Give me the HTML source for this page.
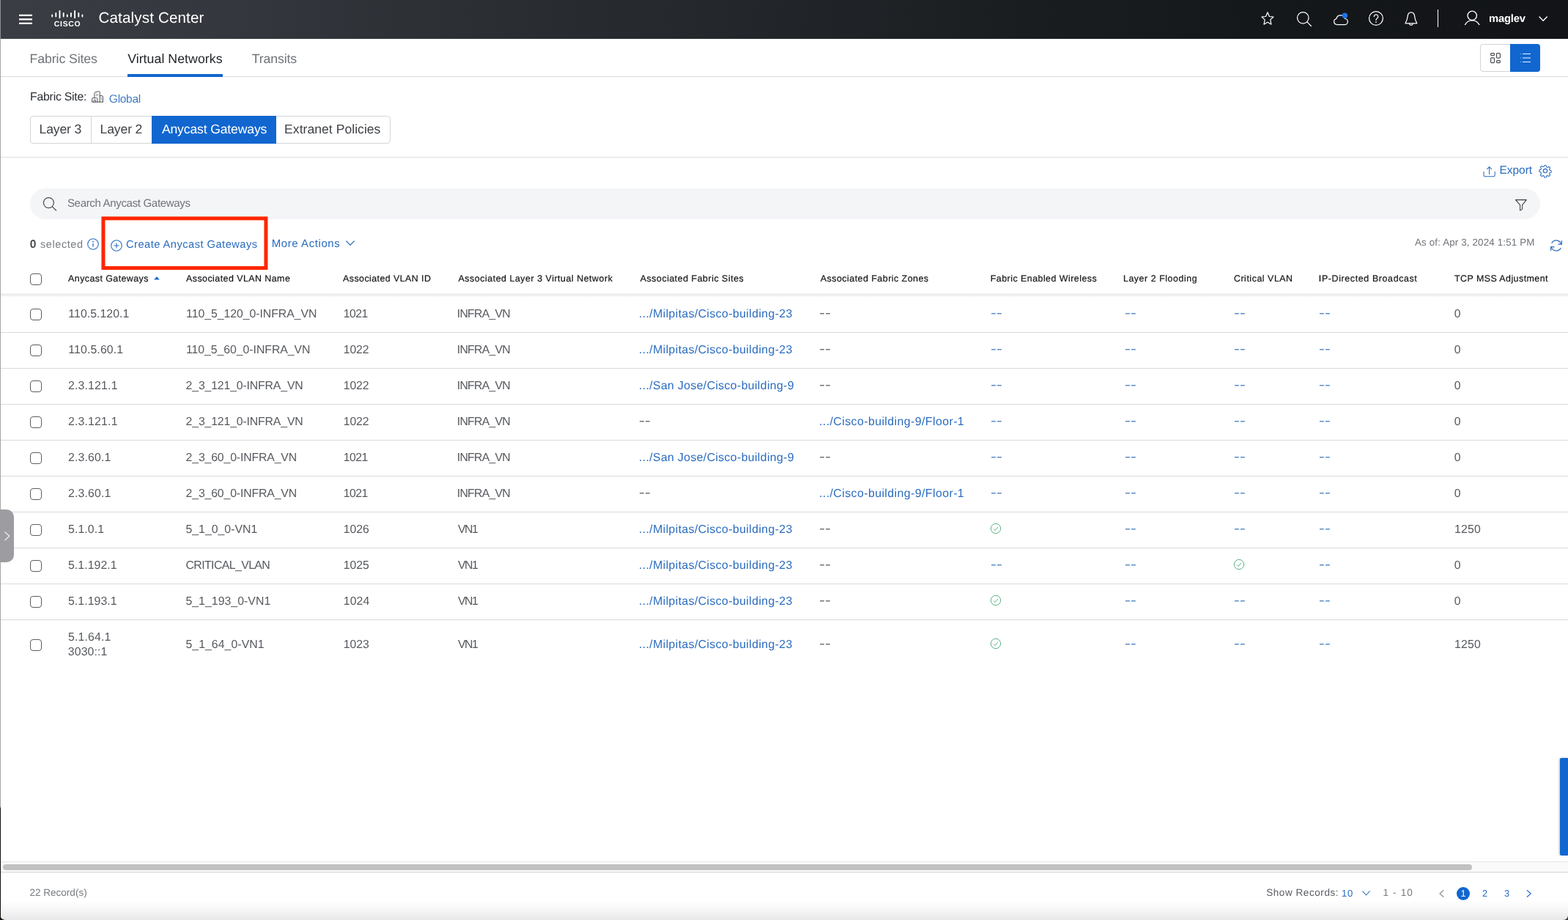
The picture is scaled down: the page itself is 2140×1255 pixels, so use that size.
<!DOCTYPE html>
<html lang="en">
<head>
<meta charset="utf-8">
<title>Catalyst Center - Virtual Networks - Anycast Gateways</title>
<style>
*{box-sizing:border-box;margin:0;padding:0}
html,body{width:2140px;height:1255px;overflow:hidden;background:#fff}
body{font-family:"Liberation Sans",Arial,sans-serif;position:relative;color:#55585d;text-rendering:geometricPrecision}
#app{will-change:transform;position:absolute;left:0;top:0;width:2140px;height:1255px;overflow:hidden;background:#fff}
.t{position:absolute;white-space:pre;display:block;line-height:24px}
.abs{position:absolute}
svg{position:absolute;overflow:visible}
.topbar{position:absolute;left:0;top:0;width:2140px;height:53px;background:linear-gradient(90deg,#3a3d43 0%,#34373d 14%,#2b2e33 30%,#23262a 47%,#1b1e21 64%,#15181b 80%,#121417 100%)}
.edge{position:absolute;left:0;top:53px;width:1px;height:1202px;background:linear-gradient(#a6a6a6 0,#a6a6a6 1047px,#111 1050px,#111 100%)}
.edge0{position:absolute;left:0;top:0;width:1px;height:53px;background:#8e8f92}
.tabline{position:absolute;left:1px;top:104px;width:2139px;height:1px;background:#d9dadd}
.tabsel{position:absolute;left:174px;top:101px;width:130px;height:4px;background:#1166cf}
.viewtg{position:absolute;left:2020px;top:60px;width:82px;height:38px;border:1px solid #d2d3d5;border-radius:4px;background:#fff}
.viewon{position:absolute;left:2061px;top:60px;width:41px;height:38px;background:#1166cf;border-radius:0 4px 4px 0}
.segs{position:absolute;left:41px;top:158px;width:492px;height:38px;border:1px solid #d3d5d8;border-radius:4px;background:#fff}
.segdiv{position:absolute;top:158px;width:1px;height:38px;background:#d3d5d8}
.segon{position:absolute;left:207px;top:158px;width:170px;height:38px;background:#1166cf}
.hr{position:absolute;left:1px;top:214px;width:2139px;height:1px;background:#dcdee0}
.search{position:absolute;left:41px;top:257px;width:2061px;height:42px;border-radius:21px;background:#f4f5f7}
i{display:block;font-style:normal}
.cb{position:absolute;left:41.2px;width:16px;height:16px;border:1px solid #5a5d61;border-radius:4px;background:#fff}
.thshadow{position:absolute;left:1px;top:400px;width:2139px;height:6px;background:linear-gradient(to bottom,#fafafa 0%,#e9e9e9 28%,#f0f0f0 50%,#fafafa 75%,#fff 100%)}
.sep{position:absolute;left:1px;width:2139px;height:1px;background:#d9dadc}
.handle{position:absolute;left:0;top:695px;width:19px;height:72px;background:#9d9da1;border-radius:0 10px 10px 0}
.rtab{position:absolute;left:2129px;top:1034px;width:11px;height:133px;background:#1166cf;border-radius:2px 0 0 2px;box-shadow:-1px 0 3px rgba(0,0,0,.25)}
.sbtop{position:absolute;left:1px;top:1175px;width:2139px;height:1px;background:#e6e6e6}
.sbtrack{position:absolute;left:1px;top:1176px;width:2139px;height:14px;background:#fafafa}
.sbthumb{position:absolute;left:4px;top:1179px;width:2005px;height:8px;border-radius:4px;background:#c1c1c1}
.sbbot{position:absolute;left:1px;top:1189px;width:2139px;height:2px;background:linear-gradient(#dcdcdc,#f0f0f0)}
.botgrad{position:absolute;left:1px;top:1228px;width:2139px;height:27px;background:linear-gradient(rgba(255,255,255,0),rgba(240,240,240,.6) 50%,#e8e8e8)}
.pgon{position:absolute;left:1988px;top:1210px;width:18px;height:18px;border-radius:9px;background:#1166cf}
.corner{position:absolute;bottom:0;width:10px;height:10px}
.ciscot{position:absolute;left:73.8px;top:27.9px;font-size:10.4px;line-height:11px;font-weight:700;color:#fff;letter-spacing:0.75px;white-space:pre}
</style>
</head>
<body>
<div id="app">
<header class="topbar">
<i class="edge0"></i>
<svg class="abs" style="left:26px;top:18px" width="18" height="16" viewBox="0 0 18 16"><path d="M0 2.8h18M0 8.4h18M0 13.8h18" stroke="#fff" stroke-width="2.3" fill="none"/></svg>
<svg class="abs" style="left:69px;top:13px" width="46" height="14" viewBox="0 0 46 14"><g stroke="#fff" stroke-width="1.9" stroke-linecap="round" fill="none"><path d="M2.2 7.4v2.2M7.3 4.9v4.7M12.5 2v9.2M17.7 4.9v4.7M22.8 7.4v2.2M27.9 4.9v4.7M33.1 2v9.2M38.3 4.9v4.7M43.4 7.4v2.2"/></g></svg>
<span class="ciscot">CISCO</span>
<span class="t brand" style="left:134.44px;top:13px;font-size:20.64px;color:#ffffff;letter-spacing:0.134px;">Catalyst Center</span>
<span class="t user" style="left:2032.07px;top:14px;font-size:14.8px;color:#ffffff;font-weight:700;letter-spacing:-0.236px;">maglev</span>
<svg class="abs" style="left:1720px;top:15px" width="20" height="20" viewBox="0 0 20 20"><path d="M10 1.8L12.4 7.5 18 8.1 13.8 11.9 14.9 18.2 10 15.3 5.1 18.2 6.2 11.9 2 8.1 7.6 7.5z" fill="none" stroke="#fff" stroke-width="1.25" stroke-linejoin="round"/></svg>
<svg class="abs" style="left:1769px;top:15px" width="22" height="22" viewBox="0 0 22 22"><circle cx="9.3" cy="9.35" r="7.75" fill="none" stroke="#fff" stroke-width="1.25"/><path d="M14.9 14.9l5.5 5.6" stroke="#fff" stroke-width="1.25" stroke-linecap="round"/></svg>
<svg class="abs" style="left:1819px;top:16px" width="22" height="20" viewBox="0 0 22 20"><path d="M5.6 17.5H16.2A4 4 0 0 0 16.5 9.5 6 6 0 0 0 4.8 9.6 4 4 0 0 0 5.6 17.5z" fill="none" stroke="#fff" stroke-width="1.25" stroke-linejoin="round"/><circle cx="16.4" cy="5.3" r="3.7" fill="#1d74e8"/></svg>
<svg class="abs" style="left:1867px;top:15px" width="22" height="22" viewBox="0 0 22 22"><circle cx="11" cy="10" r="9.4" fill="none" stroke="#fff" stroke-width="1.25"/><path d="M8.3 7.6a2.75 2.75 0 1 1 4.2 2.35c-1 .6-1.5 1.2-1.5 2.45" fill="none" stroke="#fff" stroke-width="1.25" stroke-linecap="round"/><circle cx="11" cy="15.2" r=".85" fill="#fff"/></svg>
<svg class="abs" style="left:1916px;top:15px" width="22" height="22" viewBox="0 0 22 22"><path d="M2 16.8C3.6 14 4.8 11.2 5 8 5.2 4.2 7.2 1.8 9.9 1.8S14.6 4.2 14.8 8C15 11.2 16.2 14 17.8 16.8z" fill="none" stroke="#fff" stroke-width="1.25" stroke-linejoin="round"/><path d="M7.3 17.2a2.7 3 0 0 0 5.2 0" fill="none" stroke="#fff" stroke-width="1.25"/></svg>
<div class="abs" style="left:1961.7px;top:13px;width:1.4px;height:24px;background:#fff"></div>
<svg class="abs" style="left:1998px;top:14px" width="22" height="22" viewBox="0 0 22 22"><circle cx="11.2" cy="7.3" r="6.2" fill="none" stroke="#fff" stroke-width="1.35"/><path d="M1.6 19.6C3.6 16 6.8 13.9 11.2 13.9s7.6 2.1 9.6 5.7" fill="none" stroke="#fff" stroke-width="1.35" stroke-linecap="round"/></svg>
<svg class="abs" style="left:2100px;top:22px" width="12" height="8" viewBox="0 0 12 8"><path d="M1 1l5.1 5.3L11.2 1" fill="none" stroke="#fff" stroke-width="1.4" stroke-linecap="round" stroke-linejoin="round"/></svg>
</header>
<i class="edge"></i>
<nav class="tabs">
<div class="tabline"></div><div class="tabsel"></div>
<a class="t tab" style="left:40.55px;top:68px;font-size:17.73px;color:#70747a;letter-spacing:-0.102px;">Fabric Sites</a>
<a class="t tab" style="left:174.13px;top:68px;font-size:17.73px;color:#1f2226;letter-spacing:0.049px;">Virtual Networks</a>
<a class="t tab" style="left:343.80px;top:68px;font-size:17.73px;color:#70747a;letter-spacing:-0.148px;">Transits</a>
<div class="viewtg"></div><div class="viewon"></div>
<svg class="abs" style="left:2033px;top:71px" width="16" height="16" viewBox="0 0 16 16"><g fill="none" stroke="#4a4d52" stroke-width="1.2"><rect x="1.6" y="1.6" width="4.9" height="3" rx="1.1"/><rect x="9.5" y="1.6" width="4.9" height="6.6" rx="1.1"/><rect x="1.6" y="7.8" width="4.9" height="6.8" rx="1.1"/><rect x="9.5" y="11.6" width="4.9" height="3" rx="1.1"/></g></svg>
<svg class="abs" style="left:2074px;top:72px" width="16" height="14" viewBox="0 0 16 14"><g stroke="#fff" stroke-width="1.2" fill="none"><path d="M4 1.5H15M4 12.5H15" stroke="#e4f6ff"/><path d="M4 7H15" stroke="#9cc4f5" stroke-width="1.6"/><path d="M1 1.5h1M1 7h1M1 12.5h1" stroke="#9cc4f5"/></g></svg>
</nav>
<section class="scope">
<svg class="abs" style="left:125px;top:124px" width="17" height="16" viewBox="0 0 17 16"><g fill="none" stroke="#4a4d52" stroke-width="1" stroke-linejoin="round" stroke-linecap="round"><path d="M3.9 9.4V3.1Q3.9 2.2 4.8 1.9L9.5.7Q11.2.4 11.2 2.1V15.1"/><path d="M11.2 6.6H13.9Q15.4 6.6 15.4 8.1V15.1"/><path d="M.7 15.1V11.1Q.7 9.6 2.2 9.6H6.5Q8 9.6 8 11.1V15.1"/><path d="M3.2 15.1V13.1Q3.2 12 4.35 12T5.5 13.1V15.1"/><path d="M.7 15.1H15.4"/></g><g fill="#4a4d52"><rect x="5.9" y="4" width="1" height="1"/><rect x="7.8" y="4" width="1" height="1"/><rect x="5.9" y="5.9" width="1" height="1"/><rect x="7.8" y="5.9" width="1" height="1"/><rect x="12.8" y="9.1" width="1" height="1"/><rect x="12.8" y="11.2" width="1" height="1"/></g></svg>
<div class="segs"></div>
<div class="segdiv" style="left:124px"></div>
<div class="segon"></div>
<span class="t lbl" style="left:41.09px;top:121px;font-size:15.84px;color:#2b2e33;letter-spacing:-0.243px;">Fabric Site:</span>
<a class="t lnk" style="left:148.86px;top:124px;font-size:15.55px;color:#3f7cc4;letter-spacing:-0.324px;">Global</a>
<span class="t seg" style="left:53.57px;top:164px;font-size:17.59px;color:#3e4146;letter-spacing:-0.144px;">Layer 3</span>
<span class="t seg" style="left:136.57px;top:164px;font-size:17.59px;color:#3e4146;letter-spacing:-0.136px;">Layer 2</span>
<span class="t seg" style="left:220.92px;top:164px;font-size:17.59px;color:#ffffff;letter-spacing:-0.142px;">Anycast Gateways</span>
<span class="t seg" style="left:388.10px;top:164px;font-size:17.59px;color:#3e4146;letter-spacing:0.024px;">Extranet Policies</span>
<div class="hr"></div>
</section>
<section class="toolbar">
<svg class="abs" style="left:2024.3px;top:225.6px" width="18" height="16" viewBox="0 0 18 16"><g fill="none" stroke="#2a6cbf" stroke-width="1.05" stroke-linecap="round" stroke-linejoin="round"><path d="M1 8.2v5a1.6 1.6 0 0 0 1.6 1.6h12a1.6 1.6 0 0 0 1.6-1.6V8.2"/><path d="M8.6 11.6V1.6M5.6 4.6l3-3 3 3"/></g></svg>
<svg class="abs" style="left:2100px;top:224.2px" width="18" height="18" viewBox="0 0 18 18"><g fill="none" stroke="#2a6cbf" stroke-width="1.15" stroke-linejoin="round"><circle cx="9" cy="9" r="2.7"/><path d="M7.6 1h2.8l.5 2.3 1.5.65 2-1.25 2 2-1.3 2 .65 1.5 2.25.5v2.8l-2.3.5-.6 1.5 1.3 2-2 2-2-1.3-1.5.65-.5 2.25H7.6l-.5-2.3-1.5-.6-2 1.3-2-2 1.3-2L2.3 11 0 10.5V7.7l2.3-.5.6-1.5-1.3-2 2-2 2 1.3 1.5-.65z" transform="translate(0.9 0.9) scale(0.9)"/></g></svg>
<div class="search"></div>
<svg class="abs" style="left:58px;top:268px" width="20" height="20" viewBox="0 0 20 20"><circle cx="8.4" cy="8.6" r="7" fill="none" stroke="#4a4d52" stroke-width="1.2"/><path d="M13.4 13.8l5.2 5.2" stroke="#4a4d52" stroke-width="1.2" stroke-linecap="round"/></svg>
<svg class="abs" style="left:2067px;top:271px" width="18" height="17" viewBox="0 0 18 17"><path d="M1.5 1.6h14.8l-5.7 7v5.8l-3 1.7V8.6z" fill="none" stroke="#3a3d42" stroke-width="1.05" stroke-linejoin="round"/></svg>
<svg class="abs" style="left:119px;top:325px" width="16" height="16" viewBox="0 0 16 16"><circle cx="8" cy="8" r="7.3" fill="none" stroke="#2a6cbf" stroke-width="1.1"/><path d="M8 7v4.6" stroke="#2a6cbf" stroke-width="1.3"/><circle cx="8" cy="4.7" r=".9" fill="#2a6cbf"/></svg>
<svg class="abs" style="left:0;top:0" width="400" height="400" viewBox="0 0 400 400"><rect x="140.95" y="297.9" width="222" height="67.7" fill="none" stroke="#ff2600" stroke-width="5"/></svg>
<svg class="abs" style="left:151px;top:327px" width="16" height="16" viewBox="0 0 16 16"><circle cx="8" cy="8" r="7.3" fill="none" stroke="#2a6cbf" stroke-width="1.1"/><path d="M8 4.4v7.2M4.4 8h7.2" stroke="#2a6cbf" stroke-width="1.1"/></svg>
<svg class="abs" style="left:472px;top:328px" width="12" height="8" viewBox="0 0 12 8"><path d="M.8 1l5.2 5.4L11.2 1" fill="none" stroke="#2a6cbf" stroke-width="1.2" stroke-linecap="round" stroke-linejoin="round"/></svg>
<svg class="abs" style="left:2115px;top:326px" width="18" height="18" viewBox="0 0 18 18"><g fill="none" stroke="#2a6cbf" stroke-width="1.2" stroke-linecap="round" stroke-linejoin="round"><path d="M15.8 7.2A7 7 0 0 0 3 5.4"/><path d="M2.2 10.8A7 7 0 0 0 15 12.6"/><path d="M16.4 2.6v4.6h-4.6"/><path d="M1.6 15.4v-4.6h4.6"/></g></svg>
<a class="t lnk" style="left:2046.60px;top:221px;font-size:15.48px;color:#2a6cbf;letter-spacing:-0.042px;">Export</a>
<span class="t ph" style="left:91.93px;top:266px;font-size:15.04px;color:#6f7379;letter-spacing:-0.336px;">Search Anycast Gateways</span>
<span class="t cnt" style="left:40.85px;top:322px;font-size:15.6px;color:#4a4d52;font-weight:700;">0</span>
<span class="t cnt" style="left:55.06px;top:322px;font-size:14.53px;color:#777b80;letter-spacing:0.550px;">selected</span>
<a class="t lnk" style="left:171.97px;top:322px;font-size:14.68px;color:#2a6cbf;letter-spacing:0.471px;">Create Anycast Gateways</a>
<a class="t lnk" style="left:370.67px;top:321px;font-size:14.97px;color:#2a6cbf;letter-spacing:0.600px;">More Actions</a>
<span class="t asof" style="left:1931.02px;top:319px;font-size:13.37px;color:#717479;letter-spacing:0.146px;">As of: Apr 3, 2024 1:51 PM</span>
</section>
<main class="grid">
<div class="thead">
<div class="thshadow"></div>
<i class="cb" style="top:373.2px"></i>
<span class="t th" style="left:93.12px;top:368px;font-size:12.43px;color:#17191c;-webkit-text-stroke:0.22px;letter-spacing:0.431px;">Anycast Gateways</span>
<span class="t th" style="left:254.05px;top:368px;font-size:12.43px;color:#17191c;-webkit-text-stroke:0.22px;letter-spacing:0.449px;">Associated VLAN Name</span>
<span class="t th" style="left:468.12px;top:368px;font-size:12.43px;color:#17191c;-webkit-text-stroke:0.22px;letter-spacing:0.425px;">Associated VLAN ID</span>
<span class="t th" style="left:625.49px;top:368px;font-size:12.43px;color:#17191c;-webkit-text-stroke:0.22px;letter-spacing:0.525px;">Associated Layer 3 Virtual Network</span>
<span class="t th" style="left:873.78px;top:368px;font-size:12.43px;color:#17191c;-webkit-text-stroke:0.22px;letter-spacing:0.509px;">Associated Fabric Sites</span>
<span class="t th" style="left:1119.78px;top:368px;font-size:12.43px;color:#17191c;-webkit-text-stroke:0.22px;letter-spacing:0.482px;">Associated Fabric Zones</span>
<span class="t th" style="left:1351.78px;top:368px;font-size:12.43px;color:#17191c;-webkit-text-stroke:0.22px;letter-spacing:0.468px;">Fabric Enabled Wireless</span>
<span class="t th" style="left:1532.98px;top:368px;font-size:12.43px;color:#17191c;-webkit-text-stroke:0.22px;letter-spacing:0.541px;">Layer 2 Flooding</span>
<span class="t th" style="left:1683.98px;top:368px;font-size:12.43px;color:#17191c;-webkit-text-stroke:0.22px;letter-spacing:0.522px;">Critical VLAN</span>
<span class="t th" style="left:1799.84px;top:368px;font-size:12.43px;color:#17191c;-webkit-text-stroke:0.22px;letter-spacing:0.624px;">IP-Directed Broadcast</span>
<span class="t th" style="left:1985.04px;top:368px;font-size:12.43px;color:#17191c;-webkit-text-stroke:0.22px;letter-spacing:0.444px;">TCP MSS Adjustment</span>
<svg class="abs" style="left:210px;top:377px" width="8" height="5" viewBox="0 0 8 5"><path d="M4 .2L7.8 4.6H.2z" fill="#1166cf"/></svg>
</div>
<div class="tbody">
<div class="tr">
<i class="cb" style="top:420.7px"></i>
<span class="t td" style="left:93.37px;top:417px;font-size:15.84px;color:#56595e;letter-spacing:0.049px;">110.5.120.1</span>
<span class="t td" style="left:254.06px;top:417px;font-size:15.84px;color:#56595e;letter-spacing:-0.047px;">110_5_120_0-INFRA_VN</span>
<span class="t td" style="left:468.69px;top:417px;font-size:15.84px;color:#56595e;letter-spacing:-0.510px;">1021</span>
<span class="t td" style="left:623.82px;top:417px;font-size:15.84px;color:#56595e;letter-spacing:-0.767px;">INFRA_VN</span>
<span class="t td" style="left:871.97px;top:417px;font-size:15.84px;color:#2a6cbf;letter-spacing:0.395px;">.../Milpitas/Cisco-building-23</span>
<span class="t td" style="left:1118.11px;top:416px;font-size:15.84px;color:#56595e;transform:scaleX(1.5);transform-origin:0 50%;">--</span>
<span class="t td" style="left:1351.91px;top:416px;font-size:15.84px;color:#3b78c2;transform:scaleX(1.5);transform-origin:0 50%;">--</span>
<span class="t td" style="left:1534.51px;top:416px;font-size:15.84px;color:#3b78c2;transform:scaleX(1.5);transform-origin:0 50%;">--</span>
<span class="t td" style="left:1684.31px;top:416px;font-size:15.84px;color:#3b78c2;transform:scaleX(1.5);transform-origin:0 50%;">--</span>
<span class="t td" style="left:1800.31px;top:416px;font-size:15.84px;color:#3b78c2;transform:scaleX(1.5);transform-origin:0 50%;">--</span>
<span class="t td" style="left:1984.63px;top:417px;font-size:15.84px;color:#56595e;">0</span>
<i class="sep" style="top:453px"></i>
</div>
<div class="tr">
<i class="cb" style="top:469.7px"></i>
<span class="t td" style="left:93.37px;top:466px;font-size:15.84px;color:#56595e;letter-spacing:0.115px;">110.5.60.1</span>
<span class="t td" style="left:254.06px;top:466px;font-size:15.84px;color:#56595e;letter-spacing:-0.054px;">110_5_60_0-INFRA_VN</span>
<span class="t td" style="left:468.69px;top:466px;font-size:15.84px;color:#56595e;letter-spacing:-0.096px;">1022</span>
<span class="t td" style="left:623.82px;top:466px;font-size:15.84px;color:#56595e;letter-spacing:-0.767px;">INFRA_VN</span>
<span class="t td" style="left:871.97px;top:466px;font-size:15.84px;color:#2a6cbf;letter-spacing:0.395px;">.../Milpitas/Cisco-building-23</span>
<span class="t td" style="left:1118.11px;top:465px;font-size:15.84px;color:#56595e;transform:scaleX(1.5);transform-origin:0 50%;">--</span>
<span class="t td" style="left:1351.91px;top:465px;font-size:15.84px;color:#3b78c2;transform:scaleX(1.5);transform-origin:0 50%;">--</span>
<span class="t td" style="left:1534.51px;top:465px;font-size:15.84px;color:#3b78c2;transform:scaleX(1.5);transform-origin:0 50%;">--</span>
<span class="t td" style="left:1684.31px;top:465px;font-size:15.84px;color:#3b78c2;transform:scaleX(1.5);transform-origin:0 50%;">--</span>
<span class="t td" style="left:1800.31px;top:465px;font-size:15.84px;color:#3b78c2;transform:scaleX(1.5);transform-origin:0 50%;">--</span>
<span class="t td" style="left:1984.63px;top:466px;font-size:15.84px;color:#56595e;">0</span>
<i class="sep" style="top:502px"></i>
</div>
<div class="tr">
<i class="cb" style="top:518.7px"></i>
<span class="t td" style="left:93.00px;top:515px;font-size:15.84px;color:#56595e;letter-spacing:0.180px;">2.3.121.1</span>
<span class="t td" style="left:253.58px;top:515px;font-size:15.84px;color:#56595e;letter-spacing:-0.153px;">2_3_121_0-INFRA_VN</span>
<span class="t td" style="left:468.69px;top:515px;font-size:15.84px;color:#56595e;letter-spacing:-0.096px;">1022</span>
<span class="t td" style="left:623.82px;top:515px;font-size:15.84px;color:#56595e;letter-spacing:-0.767px;">INFRA_VN</span>
<span class="t td" style="left:871.97px;top:515px;font-size:15.84px;color:#2a6cbf;letter-spacing:0.360px;">.../San Jose/Cisco-building-9</span>
<span class="t td" style="left:1118.11px;top:514px;font-size:15.84px;color:#56595e;transform:scaleX(1.5);transform-origin:0 50%;">--</span>
<span class="t td" style="left:1351.91px;top:514px;font-size:15.84px;color:#3b78c2;transform:scaleX(1.5);transform-origin:0 50%;">--</span>
<span class="t td" style="left:1534.51px;top:514px;font-size:15.84px;color:#3b78c2;transform:scaleX(1.5);transform-origin:0 50%;">--</span>
<span class="t td" style="left:1684.31px;top:514px;font-size:15.84px;color:#3b78c2;transform:scaleX(1.5);transform-origin:0 50%;">--</span>
<span class="t td" style="left:1800.31px;top:514px;font-size:15.84px;color:#3b78c2;transform:scaleX(1.5);transform-origin:0 50%;">--</span>
<span class="t td" style="left:1984.63px;top:515px;font-size:15.84px;color:#56595e;">0</span>
<i class="sep" style="top:551px"></i>
</div>
<div class="tr">
<i class="cb" style="top:567.7px"></i>
<span class="t td" style="left:93.00px;top:564px;font-size:15.84px;color:#56595e;letter-spacing:0.180px;">2.3.121.1</span>
<span class="t td" style="left:253.58px;top:564px;font-size:15.84px;color:#56595e;letter-spacing:-0.153px;">2_3_121_0-INFRA_VN</span>
<span class="t td" style="left:468.69px;top:564px;font-size:15.84px;color:#56595e;letter-spacing:-0.096px;">1022</span>
<span class="t td" style="left:623.82px;top:564px;font-size:15.84px;color:#56595e;letter-spacing:-0.767px;">INFRA_VN</span>
<span class="t td" style="left:872.11px;top:563px;font-size:15.84px;color:#56595e;transform:scaleX(1.5);transform-origin:0 50%;">--</span>
<span class="t td" style="left:1117.97px;top:564px;font-size:15.84px;color:#2a6cbf;letter-spacing:0.447px;">.../Cisco-building-9/Floor-1</span>
<span class="t td" style="left:1351.91px;top:563px;font-size:15.84px;color:#3b78c2;transform:scaleX(1.5);transform-origin:0 50%;">--</span>
<span class="t td" style="left:1534.51px;top:563px;font-size:15.84px;color:#3b78c2;transform:scaleX(1.5);transform-origin:0 50%;">--</span>
<span class="t td" style="left:1684.31px;top:563px;font-size:15.84px;color:#3b78c2;transform:scaleX(1.5);transform-origin:0 50%;">--</span>
<span class="t td" style="left:1800.31px;top:563px;font-size:15.84px;color:#3b78c2;transform:scaleX(1.5);transform-origin:0 50%;">--</span>
<span class="t td" style="left:1984.63px;top:564px;font-size:15.84px;color:#56595e;">0</span>
<i class="sep" style="top:600px"></i>
</div>
<div class="tr">
<i class="cb" style="top:616.7px"></i>
<span class="t td" style="left:93.00px;top:613px;font-size:15.84px;color:#56595e;letter-spacing:0.166px;">2.3.60.1</span>
<span class="t td" style="left:253.58px;top:613px;font-size:15.84px;color:#56595e;letter-spacing:-0.146px;">2_3_60_0-INFRA_VN</span>
<span class="t td" style="left:468.69px;top:613px;font-size:15.84px;color:#56595e;letter-spacing:-0.510px;">1021</span>
<span class="t td" style="left:623.82px;top:613px;font-size:15.84px;color:#56595e;letter-spacing:-0.767px;">INFRA_VN</span>
<span class="t td" style="left:871.97px;top:613px;font-size:15.84px;color:#2a6cbf;letter-spacing:0.360px;">.../San Jose/Cisco-building-9</span>
<span class="t td" style="left:1118.11px;top:612px;font-size:15.84px;color:#56595e;transform:scaleX(1.5);transform-origin:0 50%;">--</span>
<span class="t td" style="left:1351.91px;top:612px;font-size:15.84px;color:#3b78c2;transform:scaleX(1.5);transform-origin:0 50%;">--</span>
<span class="t td" style="left:1534.51px;top:612px;font-size:15.84px;color:#3b78c2;transform:scaleX(1.5);transform-origin:0 50%;">--</span>
<span class="t td" style="left:1684.31px;top:612px;font-size:15.84px;color:#3b78c2;transform:scaleX(1.5);transform-origin:0 50%;">--</span>
<span class="t td" style="left:1800.31px;top:612px;font-size:15.84px;color:#3b78c2;transform:scaleX(1.5);transform-origin:0 50%;">--</span>
<span class="t td" style="left:1984.63px;top:613px;font-size:15.84px;color:#56595e;">0</span>
<i class="sep" style="top:649px"></i>
</div>
<div class="tr">
<i class="cb" style="top:665.7px"></i>
<span class="t td" style="left:93.00px;top:662px;font-size:15.84px;color:#56595e;letter-spacing:0.166px;">2.3.60.1</span>
<span class="t td" style="left:253.58px;top:662px;font-size:15.84px;color:#56595e;letter-spacing:-0.146px;">2_3_60_0-INFRA_VN</span>
<span class="t td" style="left:468.69px;top:662px;font-size:15.84px;color:#56595e;letter-spacing:-0.510px;">1021</span>
<span class="t td" style="left:623.82px;top:662px;font-size:15.84px;color:#56595e;letter-spacing:-0.767px;">INFRA_VN</span>
<span class="t td" style="left:872.11px;top:661px;font-size:15.84px;color:#56595e;transform:scaleX(1.5);transform-origin:0 50%;">--</span>
<span class="t td" style="left:1117.97px;top:662px;font-size:15.84px;color:#2a6cbf;letter-spacing:0.447px;">.../Cisco-building-9/Floor-1</span>
<span class="t td" style="left:1351.91px;top:661px;font-size:15.84px;color:#3b78c2;transform:scaleX(1.5);transform-origin:0 50%;">--</span>
<span class="t td" style="left:1534.51px;top:661px;font-size:15.84px;color:#3b78c2;transform:scaleX(1.5);transform-origin:0 50%;">--</span>
<span class="t td" style="left:1684.31px;top:661px;font-size:15.84px;color:#3b78c2;transform:scaleX(1.5);transform-origin:0 50%;">--</span>
<span class="t td" style="left:1800.31px;top:661px;font-size:15.84px;color:#3b78c2;transform:scaleX(1.5);transform-origin:0 50%;">--</span>
<span class="t td" style="left:1984.63px;top:662px;font-size:15.84px;color:#56595e;">0</span>
<i class="sep" style="top:698px"></i>
</div>
<div class="tr">
<i class="cb" style="top:714.7px"></i>
<span class="t td" style="left:93.00px;top:711px;font-size:15.84px;color:#56595e;letter-spacing:0.093px;">5.1.0.1</span>
<span class="t td" style="left:253.41px;top:711px;font-size:15.84px;color:#56595e;letter-spacing:0.025px;">5_1_0_0-VN1</span>
<span class="t td" style="left:468.69px;top:711px;font-size:15.84px;color:#56595e;letter-spacing:-0.056px;">1026</span>
<span class="t td" style="left:624.98px;top:711px;font-size:15.84px;color:#56595e;letter-spacing:-1.438px;">VN1</span>
<span class="t td" style="left:871.97px;top:711px;font-size:15.84px;color:#2a6cbf;letter-spacing:0.395px;">.../Milpitas/Cisco-building-23</span>
<span class="t td" style="left:1118.11px;top:710px;font-size:15.84px;color:#56595e;transform:scaleX(1.5);transform-origin:0 50%;">--</span>
<span class="t td" style="left:1534.51px;top:710px;font-size:15.84px;color:#3b78c2;transform:scaleX(1.5);transform-origin:0 50%;">--</span>
<span class="t td" style="left:1684.31px;top:710px;font-size:15.84px;color:#3b78c2;transform:scaleX(1.5);transform-origin:0 50%;">--</span>
<span class="t td" style="left:1800.31px;top:710px;font-size:15.84px;color:#3b78c2;transform:scaleX(1.5);transform-origin:0 50%;">--</span>
<span class="t td" style="left:1985.06px;top:711px;font-size:15.84px;color:#56595e;letter-spacing:0.190px;">1250</span>
<svg class="ck" style="left:1351.2px;top:712.6px" width="16" height="16" viewBox="0 0 16 16"><circle cx="8" cy="8" r="6.7" fill="none" stroke="#52ad7c" stroke-width=".95"/><path d="M5.1 8.4l2 2 3.9-4.5" fill="none" stroke="#52ad7c" stroke-width=".95"/></svg><i class="sep" style="top:747px"></i>
</div>
<div class="tr">
<i class="cb" style="top:763.7px"></i>
<span class="t td" style="left:93.00px;top:760px;font-size:15.84px;color:#56595e;letter-spacing:0.067px;">5.1.192.1</span>
<span class="t td" style="left:253.53px;top:760px;font-size:15.84px;color:#56595e;letter-spacing:-0.586px;">CRITICAL_VLAN</span>
<span class="t td" style="left:468.69px;top:760px;font-size:15.84px;color:#56595e;letter-spacing:-0.059px;">1025</span>
<span class="t td" style="left:624.98px;top:760px;font-size:15.84px;color:#56595e;letter-spacing:-1.438px;">VN1</span>
<span class="t td" style="left:871.97px;top:760px;font-size:15.84px;color:#2a6cbf;letter-spacing:0.395px;">.../Milpitas/Cisco-building-23</span>
<span class="t td" style="left:1118.11px;top:759px;font-size:15.84px;color:#56595e;transform:scaleX(1.5);transform-origin:0 50%;">--</span>
<span class="t td" style="left:1351.91px;top:759px;font-size:15.84px;color:#3b78c2;transform:scaleX(1.5);transform-origin:0 50%;">--</span>
<span class="t td" style="left:1534.51px;top:759px;font-size:15.84px;color:#3b78c2;transform:scaleX(1.5);transform-origin:0 50%;">--</span>
<span class="t td" style="left:1800.31px;top:759px;font-size:15.84px;color:#3b78c2;transform:scaleX(1.5);transform-origin:0 50%;">--</span>
<span class="t td" style="left:1984.63px;top:760px;font-size:15.84px;color:#56595e;">0</span>
<svg class="ck" style="left:1683.0px;top:761.6px" width="16" height="16" viewBox="0 0 16 16"><circle cx="8" cy="8" r="6.7" fill="none" stroke="#52ad7c" stroke-width=".95"/><path d="M5.1 8.4l2 2 3.9-4.5" fill="none" stroke="#52ad7c" stroke-width=".95"/></svg><i class="sep" style="top:796px"></i>
</div>
<div class="tr">
<i class="cb" style="top:812.7px"></i>
<span class="t td" style="left:93.00px;top:809px;font-size:15.84px;color:#56595e;letter-spacing:0.067px;">5.1.193.1</span>
<span class="t td" style="left:253.41px;top:809px;font-size:15.84px;color:#56595e;letter-spacing:0.043px;">5_1_193_0-VN1</span>
<span class="t td" style="left:468.69px;top:809px;font-size:15.84px;color:#56595e;letter-spacing:0.138px;">1024</span>
<span class="t td" style="left:624.98px;top:809px;font-size:15.84px;color:#56595e;letter-spacing:-1.438px;">VN1</span>
<span class="t td" style="left:871.97px;top:809px;font-size:15.84px;color:#2a6cbf;letter-spacing:0.395px;">.../Milpitas/Cisco-building-23</span>
<span class="t td" style="left:1118.11px;top:808px;font-size:15.84px;color:#56595e;transform:scaleX(1.5);transform-origin:0 50%;">--</span>
<span class="t td" style="left:1534.51px;top:808px;font-size:15.84px;color:#3b78c2;transform:scaleX(1.5);transform-origin:0 50%;">--</span>
<span class="t td" style="left:1684.31px;top:808px;font-size:15.84px;color:#3b78c2;transform:scaleX(1.5);transform-origin:0 50%;">--</span>
<span class="t td" style="left:1800.31px;top:808px;font-size:15.84px;color:#3b78c2;transform:scaleX(1.5);transform-origin:0 50%;">--</span>
<span class="t td" style="left:1984.63px;top:809px;font-size:15.84px;color:#56595e;">0</span>
<svg class="ck" style="left:1351.2px;top:810.6px" width="16" height="16" viewBox="0 0 16 16"><circle cx="8" cy="8" r="6.7" fill="none" stroke="#52ad7c" stroke-width=".95"/><path d="M5.1 8.4l2 2 3.9-4.5" fill="none" stroke="#52ad7c" stroke-width=".95"/></svg><i class="sep" style="top:845px"></i>
</div>
<div class="tr">
<i class="cb" style="top:872.3px"></i>
<span class="t td" style="left:93.00px;top:858px;font-size:15.84px;color:#56595e;letter-spacing:0.166px;">5.1.64.1</span>
<span class="t td" style="left:92.85px;top:878px;font-size:15.84px;color:#56595e;letter-spacing:0.098px;">3030::1</span>
<span class="t td" style="left:253.41px;top:868px;font-size:15.84px;color:#56595e;letter-spacing:0.059px;">5_1_64_0-VN1</span>
<span class="t td" style="left:468.69px;top:868px;font-size:15.84px;color:#56595e;letter-spacing:-0.046px;">1023</span>
<span class="t td" style="left:624.98px;top:868px;font-size:15.84px;color:#56595e;letter-spacing:-1.438px;">VN1</span>
<span class="t td" style="left:871.97px;top:868px;font-size:15.84px;color:#2a6cbf;letter-spacing:0.395px;">.../Milpitas/Cisco-building-23</span>
<span class="t td" style="left:1118.11px;top:867px;font-size:15.84px;color:#56595e;transform:scaleX(1.5);transform-origin:0 50%;">--</span>
<span class="t td" style="left:1534.51px;top:867px;font-size:15.84px;color:#3b78c2;transform:scaleX(1.5);transform-origin:0 50%;">--</span>
<span class="t td" style="left:1684.31px;top:867px;font-size:15.84px;color:#3b78c2;transform:scaleX(1.5);transform-origin:0 50%;">--</span>
<span class="t td" style="left:1800.31px;top:867px;font-size:15.84px;color:#3b78c2;transform:scaleX(1.5);transform-origin:0 50%;">--</span>
<span class="t td" style="left:1985.06px;top:868px;font-size:15.84px;color:#56595e;letter-spacing:0.190px;">1250</span>
<svg class="ck" style="left:1351.2px;top:869.6px" width="16" height="16" viewBox="0 0 16 16"><circle cx="8" cy="8" r="6.7" fill="none" stroke="#52ad7c" stroke-width=".95"/><path d="M5.1 8.4l2 2 3.9-4.5" fill="none" stroke="#52ad7c" stroke-width=".95"/></svg>
</div>
</div>
</main>
<aside>
<div class="handle"></div>
<svg class="abs" style="left:6px;top:725px" width="8" height="13" viewBox="0 0 8 13"><path d="M.8.8l6 5.4-6 5.6" fill="none" stroke="#fff" stroke-width="1.1" stroke-linecap="round" stroke-linejoin="round"/></svg>
<div class="rtab"></div>
</aside>
<footer>
<div class="sbtrack"></div><div class="sbtop"></div><div class="sbthumb"></div><div class="sbbot"></div>
<div class="botgrad"></div>
<div class="pgon"></div>
<svg class="abs" style="left:1859px;top:1215px" width="12" height="8" viewBox="0 0 12 8"><path d="M.8 .8l4.7 5.2L10.2 .8" fill="none" stroke="#2a6cbf" stroke-width="1.05" stroke-linecap="round" stroke-linejoin="round"/></svg>
<svg class="abs" style="left:1963.6px;top:1213px" width="9" height="12" viewBox="0 0 9 12"><path d="M6 1.5L1 6l5 4.5" fill="none" stroke="#8a8d91" stroke-width="1.1" stroke-linecap="round" stroke-linejoin="round"/></svg>
<svg class="abs" style="left:2083.2px;top:1213px" width="9" height="12" viewBox="0 0 9 12"><path d="M1.2 1.5L6.2 6l-5 4.5" fill="none" stroke="#2a6cbf" stroke-width="1.1" stroke-linecap="round" stroke-linejoin="round"/></svg>
<span class="t ft" style="left:40.40px;top:1206px;font-size:13.52px;color:#777b80;letter-spacing:0.016px;">22 Record(s)</span>
<span class="t ft" style="left:1728.14px;top:1206px;font-size:13.52px;color:#5a5d62;letter-spacing:0.569px;">Show Records:</span>
<span class="t ft" style="left:1831.00px;top:1207px;font-size:13.08px;color:#2a6cbf;letter-spacing:0.849px;">10</span>
<span class="t ft" style="left:1887.51px;top:1206px;font-size:13.52px;color:#777b80;letter-spacing:1.157px;">1 - 10</span>
<a class="t pg" style="left:1993.56px;top:1207px;font-size:12.79px;color:#ffffff;">1</a>
<a class="t pg" style="left:2022.90px;top:1207px;font-size:12.79px;color:#2a6cbf;">2</a>
<a class="t pg" style="left:2052.89px;top:1207px;font-size:12.79px;color:#2a6cbf;">3</a>
</footer>
<div class="corner" style="left:0;width:7px;height:7px;background:radial-gradient(circle at 100% 0,rgba(28,26,16,0) 6.4px,#1c1a10 7.2px)"></div>
<div class="corner" style="right:0;width:6px;height:6px;background:radial-gradient(circle at 0 0,rgba(42,42,42,0) 5.4px,#3a3a3a 6.2px)"></div>
</div>
</body>
</html>
